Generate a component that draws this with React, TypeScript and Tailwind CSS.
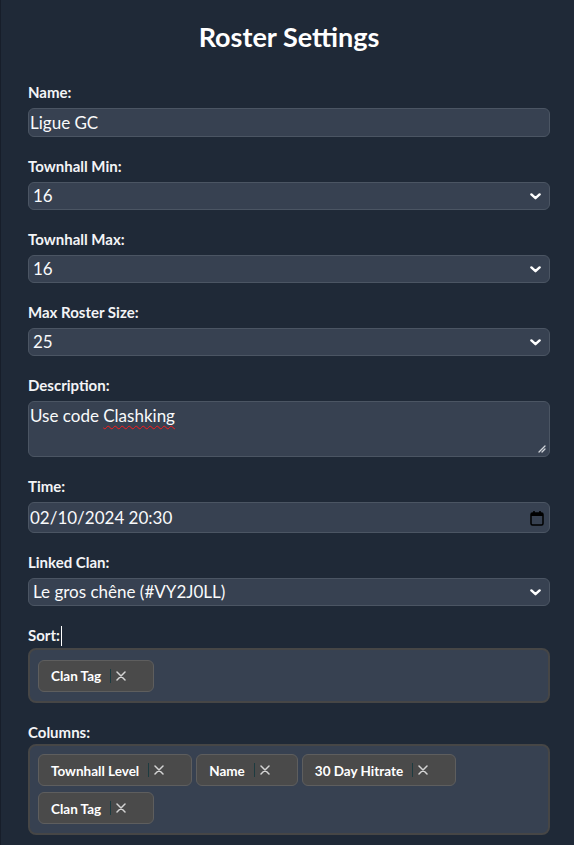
import React from "react";

const Chevron = () => (
  <svg width="11" height="7" viewBox="0 0 11 7" className="shrink-0">
    <path d="M1.4 1.4 L5.5 5.2 L9.6 1.4" fill="none" stroke="#ffffff" strokeWidth="2.4" strokeLinecap="round" strokeLinejoin="round" />
  </svg>
);

const Cross = () => (
  <svg width="10" height="10" viewBox="0 0 10 10" className="shrink-0">
    <path d="M1 1 L9 9 M9 1 L1 9" stroke="#d4d4d4" strokeWidth="1.5" strokeLinecap="round" />
  </svg>
);

const Label = ({ children, tight }: { children: React.ReactNode; tight?: boolean }) => (
  <div className={`text-[15px] leading-[20px] font-bold text-[#f3f4f6] ${tight ? "mb-[2px]" : "mb-[6px]"}`}>{children}</div>
);

const SelectBox = ({ value }: { value: string }) => (
  <div className="h-[28px] rounded-[6px] border border-[#4b5563] bg-[#374151] flex items-center justify-between pl-[4px] pr-[8px] text-[17px] leading-[20px] text-[#f9fafb]">
    <span>{value}</span>
    <Chevron />
  </div>
);

const Chip = ({ label }: { label: string }) => (
  <div className="h-[32px] rounded-[6px] border border-[#5e5e5e] bg-[#4a4a4a] flex items-center pl-[12px] pr-[27px] text-[13.5px] font-bold text-white">
    <span className="pt-px">{label}</span>
    <span className="ml-[9px] w-px h-[14px] bg-[#1d3b40]"></span>
    <span className="ml-[5px] flex items-center"><Cross /></span>
  </div>
);

export default function App() {
  return (
    <div
      className="min-h-screen bg-[#1f2937] border-l border-[#171e2a] pl-[27px] pr-[24px] pt-[19px] pb-[10px] text-white"
      style={{ fontFamily: "Lato, 'Noto Sans', sans-serif" }}
    >
      <h1 className="text-[27px] leading-[36px] font-bold text-center mb-[27px]">Roster Settings</h1>

      <div className="mb-[19px]">
        <Label>Name:</Label>
        <div className="h-[29px] rounded-[6px] border border-[#4b5563] bg-[#374151] flex items-center pl-[1px] text-[17px] leading-[20px] text-[#f9fafb]">
          Ligue GC
        </div>
      </div>

      <div className="mb-[19px]">
        <Label>Townhall Min:</Label>
        <SelectBox value="16" />
      </div>

      <div className="mb-[19px]">
        <Label>Townhall Max:</Label>
        <SelectBox value="16" />
      </div>

      <div className="mb-[19px]">
        <Label>Max Roster Size:</Label>
        <SelectBox value="25" />
      </div>

      <div className="mb-[19px]">
        <Label>Description:</Label>
        <div className="relative h-[56px] rounded-[6px] border border-[#4b5563] bg-[#374151] pl-[1px] pt-[4px] text-[17px] leading-[20px] text-[#f9fafb]">
          Use code{" "}
          <span className="underline decoration-wavy decoration-[#ff1a1a] decoration-1 underline-offset-[3px]">Clashking</span>
          <svg width="9" height="9" viewBox="0 0 9 9" className="absolute right-[3px] bottom-[3px]">
            <path d="M8 2 L2 8 M8 5 L5 8" stroke="#d1d5db" strokeWidth="1.3" strokeLinecap="round" />
          </svg>
        </div>
      </div>

      <div className="mb-[19px]">
        <Label>Time:</Label>
        <div className="h-[31px] rounded-[6px] border border-[#4b5563] bg-[#374151] flex items-center justify-between pl-[1px] pr-[5px] text-[17px] leading-[20px] text-[#f9fafb]">
          <span>02/10/2024 20:30</span>
          <svg width="14" height="16" viewBox="0 0 14 16" className="shrink-0">
            <rect x="1" y="3" width="12" height="12" rx="1.5" fill="none" stroke="#000" strokeWidth="1.5" />
            <rect x="1" y="3" width="12" height="3" fill="#000" />
            <path d="M4 1 V4 M10 1 V4" stroke="#000" strokeWidth="1.6" />
          </svg>
        </div>
      </div>

      <div className="mb-[19px]">
        <Label>Linked Clan:</Label>
        <SelectBox value="Le gros chêne (#VY2J0LL)" />
      </div>

      <div className="mb-[19px]">
        <Label tight>
          Sort:<span className="inline-block w-px h-[20px] bg-white align-middle ml-px -mt-[2px]"></span>
        </Label>
        <div className="h-[55px] rounded-[8px] border-2 border-[#464646] bg-[#374151] flex flex-wrap items-center px-[8px]">
          <Chip label="Clan Tag" />
        </div>
      </div>

      <div>
        <Label tight>Columns:</Label>
        <div className="rounded-[8px] border-2 border-[#464646] bg-[#374151] flex flex-wrap gap-x-[4px] gap-y-[6px] px-[8px] pt-[8px] pb-[9px]">
          <Chip label="Townhall Level" />
          <Chip label="Name" />
          <Chip label="30 Day Hitrate" />
          <Chip label="Clan Tag" />
        </div>
      </div>
    </div>
  );
}
